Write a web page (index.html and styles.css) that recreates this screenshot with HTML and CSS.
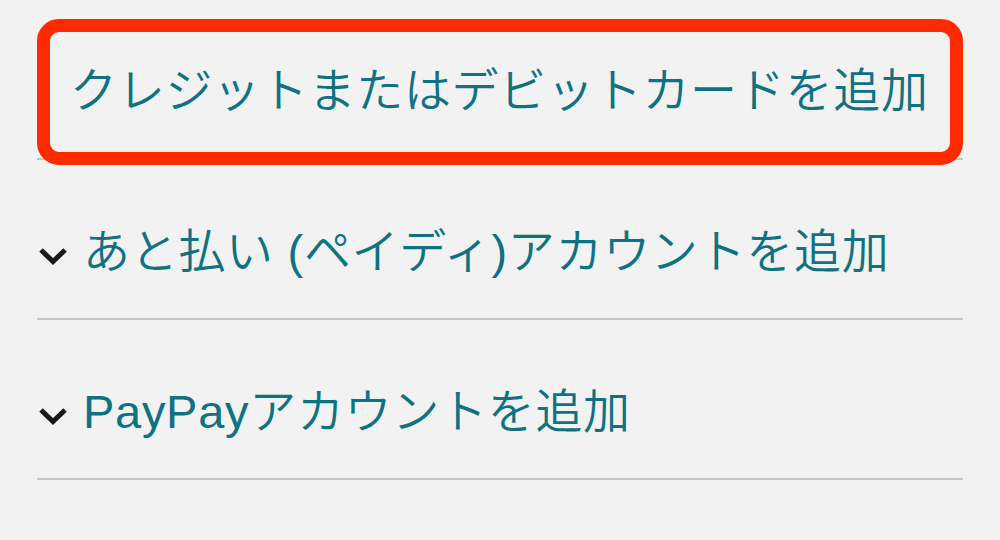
FILE: index.html
```html
<!DOCTYPE html>
<html lang="ja">
<head>
    <meta charset="UTF-8">
    <meta name="viewport" content="width=device-width, initial-scale=1.0">
    <title>支払い方法を追加</title>
    <link rel="stylesheet" href="styles.css">
</head>
<body>
    <!-- Payment methods -->
    <ul class="method-list">
        <li class="method-row method-row-card">
            <a class="method-link" href="#">クレジットまたはデビットカードを追加</a>
            <span class="highlight-box"></span>
        </li>
        <li class="method-row">
            <svg class="chevron" viewBox="0 0 30 18" aria-hidden="true">
                <path d="M3 3 L15 14.5 L27 3" fill="none" stroke="#1a1a1a" stroke-width="5" stroke-linejoin="miter"/>
            </svg>
            <a class="method-link" href="#">あと払い (ペイディ)アカウントを追加</a>
        </li>
        <li class="method-row">
            <svg class="chevron" viewBox="0 0 30 18" aria-hidden="true">
                <path d="M3 3 L15 14.5 L27 3" fill="none" stroke="#1a1a1a" stroke-width="5" stroke-linejoin="miter"/>
            </svg>
            <a class="method-link" href="#">PayPayアカウントを追加</a>
        </li>
    </ul>
</body>
</html>
```

FILE: styles.css
```css
/* General Styles */
body {
    margin: 0;
    padding: 0;
    background: #F2F2F2;
    font-family: "Liberation Sans", "Noto Sans CJK JP", sans-serif;
}

/* Method list */
.method-list {
    list-style: none;
    margin: 0 37px;
    padding: 0;
}

.method-row {
    position: relative;
    display: flex;
    align-items: center;
    gap: 15px;
    height: 134px;
    padding: 24px 0 0 1px;
    border-bottom: 2px solid #C6C6C6;
}

.method-row-card {
    padding: 22px 0 0 33px;
    height: 136px;
}

.method-link {
    color: #0E7282;
    font-size: 47px;
    font-weight: 350;
    line-height: 1;
    letter-spacing: 0.7px;
    text-decoration: none;
    white-space: nowrap;
}

.chevron {
    width: 30px;
    height: 18px;
    margin-top: 10px;
    flex-shrink: 0;
}

/* Red annotation frame drawn over the first row */
.highlight-box {
    position: absolute;
    left: 0;
    top: 19px;
    width: 926px;
    height: 146px;
    box-sizing: border-box;
    border: 13px solid #FF2A00;
    border-radius: 22px;
}
```
